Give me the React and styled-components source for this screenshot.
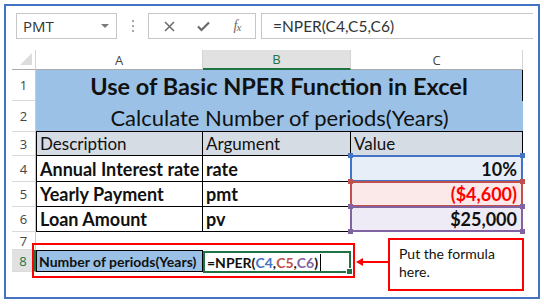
import React from 'react'
import styled, { createGlobalStyle } from 'styled-components'

const GlobalStyle = createGlobalStyle`
  body {
    margin: 0;
    background: #fff;
  }
`

const Frame = styled.div`
  position: relative;
  box-sizing: border-box;
  width: 536px;
  height: 295px;
  margin: 4px;
  border: 2px solid #4472c4;
  background: #fff;
  overflow: hidden;
`

const FormulaBar = styled.div`
  display: flex;
  align-items: center;
  height: 26px;
  margin: 7px 0 0 10px;
`

const NameBox = styled.div`
  box-sizing: border-box;
  width: 101px;
  height: 26px;
  border: 1px solid #c6c6c6;
  display: flex;
  align-items: center;
  justify-content: space-between;
  padding: 0 7px 0 6px;
  font: 15px "Open Sans", sans-serif;
  color: #333;
`

const DropArrow = styled.span`
  width: 0;
  height: 0;
  border-left: 4px solid transparent;
  border-right: 4px solid transparent;
  border-top: 4px solid #7a7a7a;
`

const Grip = styled.div`
  width: 31px;
  display: flex;
  flex-direction: column;
  align-items: center;
  gap: 3px;

  span {
    width: 2px;
    height: 2px;
    background: #a6a6a6;
  }
`

const ButtonBox = styled.div`
  box-sizing: border-box;
  width: 108px;
  height: 26px;
  border: 1px solid #c6c6c6;
  display: grid;
  grid-template-columns: repeat(3, 1fr);
  align-items: center;
  justify-items: center;
  padding: 0 1px 0 3px;
`

const Fx = styled.span`
  font: italic 14px "Liberation Serif", serif;
  color: #6a6a6a;
  letter-spacing: -1px;

  sub {
    font-size: 11px;
    vertical-align: -1px;
  }
`

const FormulaBox = styled.div`
  box-sizing: border-box;
  width: 272px;
  height: 26px;
  margin-left: 5px;
  border: 1px solid #c6c6c6;
  border-right: none;
  display: flex;
  align-items: center;
  padding-left: 11px;
  font: 15.5px Lato, sans-serif;
  color: #333;
`

const Sheet = styled.div`
  display: grid;
  grid-template-columns: 24px 167px 148px 172px;
  grid-template-rows: 20px 31px 31px 24px 26px 25px 25px 18px 22px;
  margin: 11px 0 0 6px;
  font-family: Lato, sans-serif;
  color: #111;
`

const Corner = styled.div`
  box-sizing: border-box;
  border-right: 1px solid #d4d4d4;
  border-bottom: 1px solid #ababab;
  display: flex;
  align-items: flex-end;
  justify-content: flex-end;
  padding: 0 3px 4px 0;

  span {
    width: 0;
    height: 0;
    border-left: 12px solid transparent;
    border-bottom: 12px solid #dcdcdc;
  }
`

const ColHead = styled.div`
  box-sizing: border-box;
  display: flex;
  align-items: center;
  justify-content: center;
  font: 13px "Open Sans", sans-serif;
  color: ${p => (p.$active ? '#217346' : '#444')};
  background: ${p => (p.$active ? '#e1e1e1' : '#fff')};
  border-right: 1px solid #d4d4d4;
  border-bottom: ${p => (p.$active ? '2px solid #217346' : '1px solid #ababab')};
`

const RowHead = styled.div`
  box-sizing: border-box;
  display: flex;
  align-items: center;
  justify-content: center;
  font: 13px "Open Sans", sans-serif;
  color: ${p => (p.$active ? '#217346' : '#444')};
  background: ${p => (p.$active ? '#e1e1e1' : '#fff')};
  border-bottom: 1px solid #dadada;
  border-right: ${p => (p.$active ? '2px solid #217346' : '1px solid #c8c8c8')};
`

const Title = styled.div`
  grid-column: span 3;
  box-sizing: border-box;
  display: flex;
  align-items: center;
  justify-content: center;
  background: #9bc2e6;
  font-size: ${p => (p.$bold ? '23.5px' : '22px')};
  font-weight: ${p => (p.$bold ? 700 : 400)};
  border-right: ${p => (p.$bold ? '1px solid #000' : 'none')};
  border-bottom: ${p => (p.$bold ? 'none' : '1px solid #000')};
  padding-top: ${p => (p.$bold ? '0' : '2px')};
`

const Cell = styled.div`
  box-sizing: border-box;
  display: flex;
  align-items: center;
  padding: 0 3px;
  font-size: ${p => (p.$bold ? '18px' : '17px')};
  font-weight: ${p => (p.$bold ? 700 : 400)};
  background: ${p => (p.$head ? '#d6dce4' : '#fff')};
  border-right: 1px solid #000;
  border-bottom: 1px solid #000;
  border-left: ${p => (p.$first ? '1px solid #000' : 'none')};
  white-space: nowrap;
`

const tones = {
  blue: { line: '#4472c4', fill: '#e7eef8', text: '#111' },
  red: { line: '#c0504d', fill: '#fbe9e9', text: '#ff0000' },
  purple: { line: '#8064a2', fill: '#efebf6', text: '#111' },
}

const RangeCell = styled.div`
  position: relative;
  box-sizing: border-box;
  display: flex;
  align-items: center;
  justify-content: flex-end;
  padding-right: 4px;
  margin: -1px 0 0 -1px;
  font-size: 18px;
  font-weight: 700;
  color: ${p => tones[p.$tone].text};
  background: ${p => tones[p.$tone].fill};
  border: 2px solid ${p => tones[p.$tone].line};
`

const Handle = styled.span`
  position: absolute;
  width: 5px;
  height: 5px;
  background: ${p => tones[p.$tone].line};
  ${p => (p.$top ? 'top: -4px;' : 'bottom: -4px;')}
  ${p => (p.$left ? 'left: -4px;' : 'right: -4px;')}
  z-index: 1;
`

const Blank = styled.div`
  grid-column: span 3;
`

const LabelCell = styled.div`
  box-sizing: border-box;
  display: flex;
  align-items: center;
  padding-left: 2px;
  background: #9bc2e6;
  border: 1px solid #000;
  font-size: 14px;
  font-weight: 700;
  white-space: nowrap;
  overflow: hidden;
`

const ActiveCell = styled.div`
  position: relative;
  box-sizing: border-box;
  display: flex;
  align-items: center;
  padding-left: 2px;
  margin-top: 1px;
  height: 22px;
  border: 2px solid #217346;
  font-size: 14px;
  font-weight: 700;
  white-space: nowrap;

  &::after {
    content: '';
    position: absolute;
    right: -4px;
    bottom: -4px;
    width: 5px;
    height: 5px;
    background: #217346;
    border: 1px solid #fff;
  }
`

const Ref = styled.span`
  color: ${p => tones[p.$tone].line};
`

const Caret = styled.span`
  width: 1px;
  height: 17px;
  margin-left: 2px;
  background: #000;
`

const Highlight = styled.div`
  position: absolute;
  left: 26px;
  top: 237px;
  width: 323px;
  height: 35px;
  box-sizing: border-box;
  border: 2px solid #ff0000;
  pointer-events: none;
`

const Arrow = styled.svg`
  position: absolute;
  left: 348px;
  top: 250px;
`

const Callout = styled.div`
  position: absolute;
  left: 382px;
  top: 232px;
  box-sizing: border-box;
  width: 136px;
  height: 53px;
  border: 2px solid #ff0000;
  background: #fff;
  padding: 5px 0 0 9px;
  font: 14px/18px Lato, sans-serif;
  color: #111;
`

const RangeValue = ({ tone, children }) => (
  <RangeCell $tone={tone}>
    <Handle $tone={tone} $top $left />
    <Handle $tone={tone} $top />
    <Handle $tone={tone} $left />
    <Handle $tone={tone} />
    {children}
  </RangeCell>
)

const rows = [
  { n: 4, desc: 'Annual Interest rate', arg: 'rate', value: '10%', tone: 'blue' },
  { n: 5, desc: 'Yearly Payment', arg: 'pmt', value: '($4,600)', tone: 'red' },
  { n: 6, desc: 'Loan Amount', arg: 'pv', value: '$25,000', tone: 'purple' },
]

const App = () => {
  return (
    <>
      <GlobalStyle />
      <Frame>
        <FormulaBar>
          <NameBox>
            PMT
            <DropArrow />
          </NameBox>
          <Grip>
            <span />
            <span />
            <span />
          </Grip>
          <ButtonBox>
            <svg width="11" height="11" viewBox="0 0 11 11">
              <path d="M1 1 L10 10 M10 1 L1 10" stroke="#6a6a6a" strokeWidth="1.5" />
            </svg>
            <svg width="13" height="11" viewBox="0 0 13 11">
              <path d="M1 5.5 L4.5 9 L12 1.5" stroke="#6a6a6a" strokeWidth="2.2" fill="none" />
            </svg>
            <Fx>
              f<sub>x</sub>
            </Fx>
          </ButtonBox>
          <FormulaBox>=NPER(C4,C5,C6)</FormulaBox>
        </FormulaBar>

        <Sheet>
          <Corner>
            <span />
          </Corner>
          <ColHead>A</ColHead>
          <ColHead $active>B</ColHead>
          <ColHead>C</ColHead>

          <RowHead>1</RowHead>
          <Title $bold>Use of Basic NPER Function in Excel</Title>

          <RowHead>2</RowHead>
          <Title>Calculate Number of periods(Years)</Title>

          <RowHead>3</RowHead>
          <Cell $head $first>Description</Cell>
          <Cell $head>Argument</Cell>
          <Cell $head>Value</Cell>

          {rows.map(row => (
            <React.Fragment key={row.n}>
              <RowHead>{row.n}</RowHead>
              <Cell $bold $first>{row.desc}</Cell>
              <Cell $bold>{row.arg}</Cell>
              <RangeValue tone={row.tone}>{row.value}</RangeValue>
            </React.Fragment>
          ))}

          <RowHead>7</RowHead>
          <Blank />

          <RowHead $active>8</RowHead>
          <LabelCell>Number of periods(Years)</LabelCell>
          <ActiveCell>
            =NPER(<Ref $tone="blue">C4</Ref>,<Ref $tone="red">C5</Ref>,<Ref $tone="purple">C6</Ref>)
            <Caret />
          </ActiveCell>
          <div />
        </Sheet>

        <Highlight />
        <Arrow width="36" height="12" viewBox="0 0 36 12">
          <path d="M8 6 H34" stroke="#ff0000" strokeWidth="2" />
          <path d="M2 6 L9 2 L9 10 Z" fill="#ff0000" />
        </Arrow>
        <Callout>
          Put the formula
          <br />
          here.
        </Callout>
      </Frame>
    </>
  )
}

export default App
